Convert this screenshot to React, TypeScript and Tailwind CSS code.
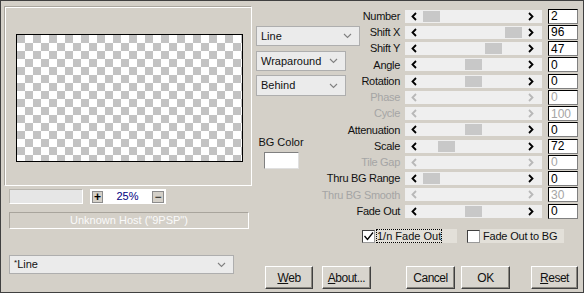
import React from 'react';

type Row = { label: string; value: string; thumb?: number; off?: boolean };

const rows: Row[] = [
  { label: 'Number', value: '2', thumb: 18 },
  { label: 'Shift X', value: '96', thumb: 100 },
  { label: 'Shift Y', value: '47', thumb: 80 },
  { label: 'Angle', value: '0', thumb: 60 },
  { label: 'Rotation', value: '0', thumb: 60 },
  { label: 'Phase', value: '0', off: true },
  { label: 'Cycle', value: '100', off: true },
  { label: 'Attenuation', value: '0', thumb: 60 },
  { label: 'Scale', value: '72', thumb: 33 },
  { label: 'Tile Gap', value: '0', off: true },
  { label: 'Thru BG Range', value: '0', thumb: 18 },
  { label: 'Thru BG Smooth', value: '30', off: true },
  { label: 'Fade Out', value: '0', thumb: 60 },
];

function Arrow({ dir, off }: { dir: 'l' | 'r'; off?: boolean }) {
  return (
    <svg width="6" height="9" viewBox="0 0 6 9">
      <polyline
        points={dir === 'l' ? '5,1 1.5,4.5 5,8' : '1,1 4.5,4.5 1,8'}
        fill="none"
        stroke={off ? '#b8b8b8' : '#000'}
        strokeWidth="1.8"
      />
    </svg>
  );
}

function Chevron() {
  return (
    <svg width="9" height="6" viewBox="0 0 9 6">
      <polyline points="1,1 4.5,4.5 8,1" fill="none" stroke="#808080" strokeWidth="1.1" />
    </svg>
  );
}

function Select({ children, className }: { children: React.ReactNode; className: string }) {
  return (
    <div className={`flex items-center justify-between border border-[#aeaeae] bg-[#ebebeb] pl-[4px] pr-[7px] text-[11px] text-[#111] ${className}`}>
      <span>{children}</span>
      <Chevron />
    </div>
  );
}

function Button({ children, className }: { children: React.ReactNode; className: string }) {
  return (
    <div className={`flex h-[23px] items-center justify-center border border-t-white border-l-white border-r-[#404040] border-b-[#404040] bg-[#d8d5ce] text-[12px] tracking-[-0.5px] text-[#111] shadow-[inset_-1px_-1px_0_#8a8780] ${className}`}>
      {children}
    </div>
  );
}

function Check({ checked }: { checked?: boolean }) {
  return (
    <div className="flex h-[13px] w-[13px] shrink-0 items-center justify-center border border-t-[#404040] border-l-[#404040] border-r-[#9a9a9a] border-b-[#9a9a9a] bg-white">
      {checked && (
        <svg width="11" height="11" viewBox="0 0 11 11">
          <polyline points="1.5,5 4.5,8.5 10,1.5" fill="none" stroke="#000" strokeWidth="1.3" />
        </svg>
      )}
    </div>
  );
}

function SliderRow({ row }: { row: Row }) {
  return (
    <div className="flex h-[16.25px] items-center">
      <div className={`flex w-[40px] shrink-0 justify-end whitespace-nowrap text-[11px] tracking-[-0.3px] ${row.off ? 'text-[#a5a5a5]' : 'text-[#111]'}`}>
        {row.label}
      </div>
      <div className="relative ml-[5px] flex h-[13px] w-[137px] shrink-0 items-center justify-between bg-[#efefef] pl-[6px] pr-[8px]">
        {row.thumb !== undefined && (
          <div className="absolute top-[1px] h-[11px] w-[17px] bg-[#c8c8c8]" style={{ left: row.thumb }} />
        )}
        <Arrow dir="l" off={row.off} />
        <Arrow dir="r" off={row.off} />
      </div>
      <div className={`ml-[6px] flex h-[15px] w-[30px] shrink-0 items-center border border-t-black border-l-black border-r-[#808080] border-b-[#808080] bg-white pl-[2px] text-[12px] leading-none ${row.off ? 'text-[#a5a5a5]' : 'text-black'}`}>
        {row.value}
      </div>
    </div>
  );
}

export default function App() {
  return (
    <div className="flex h-[293px] w-[584px] border border-[#404040] bg-[#d4d0c8] font-['Liberation_Sans',Arial,sans-serif] select-none">
      {/* left: preview */}
      <div className="flex w-[251px] shrink-0 flex-col">
        <div className="ml-[3px] mt-[5px] h-[180px] w-[248px] border border-t-[#aaa69e] border-l-[#aaa69e] border-r-white border-b-white shadow-[inset_1px_1px_0_#fff]">
          <div className="ml-[11px] mt-[27px] h-[128px] w-[227px] border border-black bg-[repeating-conic-gradient(#ffffff_0%_25%,#c3c3c3_0%_50%)] bg-[length:16px_16px]" />
        </div>
        <div className="mt-[3px] flex">
          <div className="ml-[8px] h-[15px] w-[74px] border border-t-[#b8b5ae] border-l-[#b8b5ae] border-r-white border-b-white bg-[#e6e6e6]" />
          <div className="ml-[7px] flex h-[15px] w-[76px] items-center justify-between bg-white px-[2px]">
            <div className="flex h-[12px] w-[11px] items-center justify-center border border-[#8c8c8c] bg-[#d4d0c8] text-[12px] font-bold leading-none text-black">+</div>
            <span className="text-[11px] text-[#000080]">25%</span>
            <div className="flex h-[12px] w-[12px] items-center justify-center border border-[#8c8c8c] bg-[#d4d0c8] text-[12px] leading-none text-black">−</div>
          </div>
        </div>
        <div className="ml-[8px] mt-[8px] flex h-[17px] w-[240px] items-center justify-center border border-t-[#a8a49c] border-l-[#a8a49c] border-r-white border-b-white text-[11px] text-[#fafafa]">
          Unknown Host ("9PSP")
        </div>
        <Select className="ml-[8px] mt-[26px] h-[19px] w-[225px]">
          <span className="relative -top-[3px] text-[8px]">*</span>Line
        </Select>
      </div>

      {/* right: controls */}
      <div className="flex flex-1 flex-col">
        <div className="flex">
          <div className="ml-[4px] flex w-[104px] shrink-0 flex-col">
            <Select className="mt-[25px] h-[20px] w-[104px]">Line</Select>
            <Select className="mt-[5px] h-[20px] w-[90px]">Wraparound</Select>
            <Select className="mt-[4px] h-[21px] w-[90px]">Behind</Select>
            <div className="mt-[40px] flex w-[50px] flex-col items-center">
              <span className="text-[11px] leading-[13px] text-[#111]">BG Color</span>
              <div className="mt-[3px] h-[17px] w-[35px] border border-t-[#808080] border-l-[#808080] border-r-[#e0e0e0] border-b-[#e0e0e0] bg-white" />
            </div>
          </div>
          <div className="mt-[7px] flex flex-col">
            {rows.map((r) => (
              <SliderRow key={r.label} row={r} />
            ))}
          </div>
        </div>

        <div className="mt-[9px] flex h-[16px] items-center text-[11px] text-[#111]">
          <div className="ml-[110px] flex items-center">
            <Check checked />
            <div className="flex h-[14px] w-[82px] items-center bg-[#e3e0d9] pl-[2px]">
              <span className="leading-[12px] outline-1 outline-dotted outline-black">1/n Fade Out</span>
            </div>
          </div>
          <div className="ml-[10px] flex items-center">
            <Check />
            <div className="flex h-[14px] w-[84px] items-center bg-[#e3e0d9] pl-[3px] tracking-[-0.2px]">Fade Out to BG</div>
          </div>
        </div>

        <div className="mt-[22px] flex">
          <Button className="ml-[13px] w-[48px]"><span className="underline">W</span>eb</Button>
          <Button className="ml-[9px] w-[49px]"><span className="underline">A</span>bout...</Button>
          <Button className="ml-[35px] w-[49px]">Cancel</Button>
          <Button className="ml-[6px] w-[49px]">OK</Button>
          <Button className="ml-[21px] w-[47px]"><span className="underline">R</span>eset</Button>
        </div>
      </div>
    </div>
  );
}
